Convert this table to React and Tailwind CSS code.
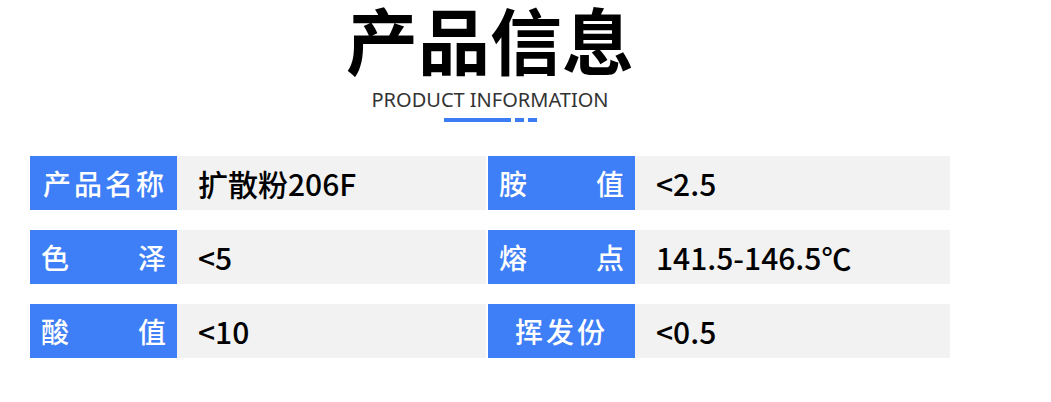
import React from 'react';

const rows = [
  [['产', '品', '名', '称'], '扩散粉206F', ['胺', '值'], '<2.5'],
  [['色', '泽'], '<5', ['熔', '点'], '141.5-146.5℃'],
  [['酸', '值'], '<10', ['挥发份'], '<0.5'],
];

function Label({ chars }) {
  const single = chars.length === 1;
  return (
    <div
      className={`w-[147px] h-full bg-[#3e7ef6] text-white text-[28px] font-medium flex items-center ${
        single ? 'justify-center tracking-[3px]' : chars.length === 2 ? 'justify-between px-[11px]' : 'justify-between px-[13px]'
      }`}
    >
      {chars.map((c, i) => (
        <span key={i}>{c}</span>
      ))}
    </div>
  );
}

function Cell({ label, value, width }) {
  return (
    <div className={`flex h-full ${width}`}>
      <Label chars={label} />
      <div className="flex-1 h-full bg-[#f2f2f2] flex items-center pl-[21px] text-[30px] font-medium text-black">
        {value}
      </div>
    </div>
  );
}

export default function App() {
  return (
    <div className="w-[1051px] h-[402px] bg-white overflow-hidden font-['Noto_Sans_CJK_SC',sans-serif]">
      <div className="w-[920px] ml-[30px] flex flex-col items-center">
        <h1 className="pt-[2px] text-[72px] leading-[72px] font-bold text-black">产品信息</h1>
        <p className="mt-[14px] text-[20px] leading-[24px] text-[#333] font-['Noto_Sans',sans-serif]">
          PRODUCT INFORMATION
        </p>
        <div className="mt-[6px] flex gap-[4px] h-[4px]">
          <span className="w-[67px] bg-[#3b7cf4]"></span>
          <span className="w-[9px] bg-[#3b7cf4]"></span>
          <span className="w-[9px] bg-[#3b7cf4]"></span>
        </div>
        <div className="mt-[34px] w-full flex flex-col gap-[20px]">
          {rows.map((r, i) => (
            <div key={i} className="flex gap-[2px] h-[54px]">
              <Cell label={r[0]} value={r[1]} width="w-[456px]" />
              <Cell label={r[2]} value={r[3]} width="w-[462px]" />
            </div>
          ))}
        </div>
      </div>
    </div>
  );
}
